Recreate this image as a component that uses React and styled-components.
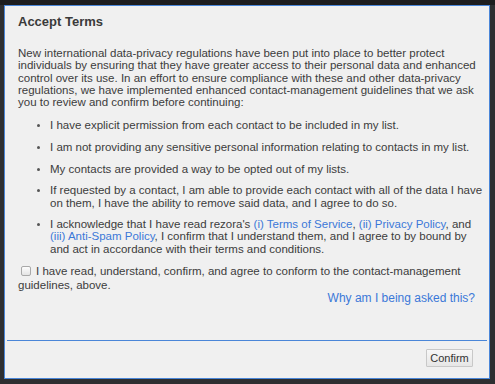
import styled, { createGlobalStyle } from "styled-components";

const GlobalStyle = createGlobalStyle`
  html, body {
    margin: 0;
    padding: 0;
    background: #2e2f31;
    font-family: "Liberation Sans", Arial, sans-serif;
  }
`;

const Page = styled.div`
  width: 495px;
  height: 384px;
  padding: 5px 0 0 4px;
  box-sizing: border-box;
  background: linear-gradient(#1d1d1e 0 5px, #2e2f31 5px);
`;

const Dialog = styled.div`
  width: 486px;
  height: 374px;
  box-sizing: border-box;
  background: #f0f0f0;
  border: 1px solid #4a86d8;
  display: flex;
  flex-direction: column;
  color: #3c3c3c;
`;

const Title = styled.h2`
  margin: 0;
  padding: 8px 0 0 13px;
  font-size: 13px;
  font-weight: bold;
  line-height: 15px;
  color: #3a3a3a;
`;

const Body = styled.div`
  flex: 1;
  padding: 18px 14px 0 13px;
  font-size: 11.5px;
  line-height: 12.3px;
  white-space: nowrap;
`;

const Intro = styled.p`
  margin: 0;
`;

const TermList = styled.ul`
  margin: 11px 0 0;
  padding: 0 0 0 32px;
  list-style: none;
  display: flex;
  flex-direction: column;
  gap: 9.3px;
`;

const Term = styled.li`
  position: relative;
  &::before {
    content: "";
    position: absolute;
    left: -13px;
    top: 5px;
    width: 3px;
    height: 3px;
    border-radius: 50%;
    background: #555;
  }
`;

const Link = styled.a`
  color: #3b78d8;
  text-decoration: none;
`;

const Agree = styled.label`
  display: block;
  margin-top: 9px;
  line-height: 14px;
`;

const Box = styled.input`
  margin: 0 5px 0 3px;
  width: 10px;
  height: 10px;
  vertical-align: -1px;
  appearance: none;
  border: 1px solid #a9a9a9;
  border-radius: 2px;
  background: linear-gradient(#fdfdfd, #e4e4e4);
`;

const Why = styled.div`
  margin-top: 0;
  text-align: right;
  font-size: 12px;
`;

const Footer = styled.div`
  margin: 0 2px;
  height: 38px;
  border-top: 1px solid #4a86d8;
  display: flex;
  justify-content: flex-end;
  align-items: flex-start;
  padding: 8px 14px 0 0;
  box-sizing: border-box;
`;

const Button = styled.button`
  font-family: inherit;
  font-size: 11px;
  color: #333;
  height: 18px;
  width: 47px;
  padding: 0;
  background: linear-gradient(#f7f7f7, #e6e6e6);
  border: 1px solid #c8c8c8;
  border-radius: 1px;
`;

export default function App() {
  return (
    <>
      <GlobalStyle />
      <Page>
        <Dialog>
          <Title>Accept Terms</Title>
          <Body>
            <Intro>
              New international data-privacy regulations have been put into place to better protect<br />
              individuals by ensuring that they have greater access to their personal data and enhanced<br />
              control over its use. In an effort to ensure compliance with these and other data-privacy<br />
              regulations, we have implemented enhanced contact-management guidelines that we ask<br />
              you to review and confirm before continuing:
            </Intro>
            <TermList>
              <Term>I have explicit permission from each contact to be included in my list.</Term>
              <Term>I am not providing any sensitive personal information relating to contacts in my list.</Term>
              <Term>My contacts are provided a way to be opted out of my lists.</Term>
              <Term>
                If requested by a contact, I am able to provide each contact with all of the data I have<br />
                on them, I have the ability to remove said data, and I agree to do so.
              </Term>
              <Term>
                I acknowledge that I have read rezora's <Link href="#">(i) Terms of Service</Link>,{" "}
                <Link href="#">(ii) Privacy Policy</Link>, and<br />
                <Link href="#">(iii) Anti-Spam Policy</Link>, I confirm that I understand them, and I agree to by bound by<br />
                and act in accordance with their terms and conditions.
              </Term>
            </TermList>
            <Agree>
              <Box type="checkbox" />
              I have read, understand, confirm, and agree to conform to the contact-management<br />
              guidelines, above.
            </Agree>
            <Why>
              <Link href="#">Why am I being asked this?</Link>
            </Why>
          </Body>
          <Footer>
            <Button>Confirm</Button>
          </Footer>
        </Dialog>
      </Page>
    </>
  );
}
